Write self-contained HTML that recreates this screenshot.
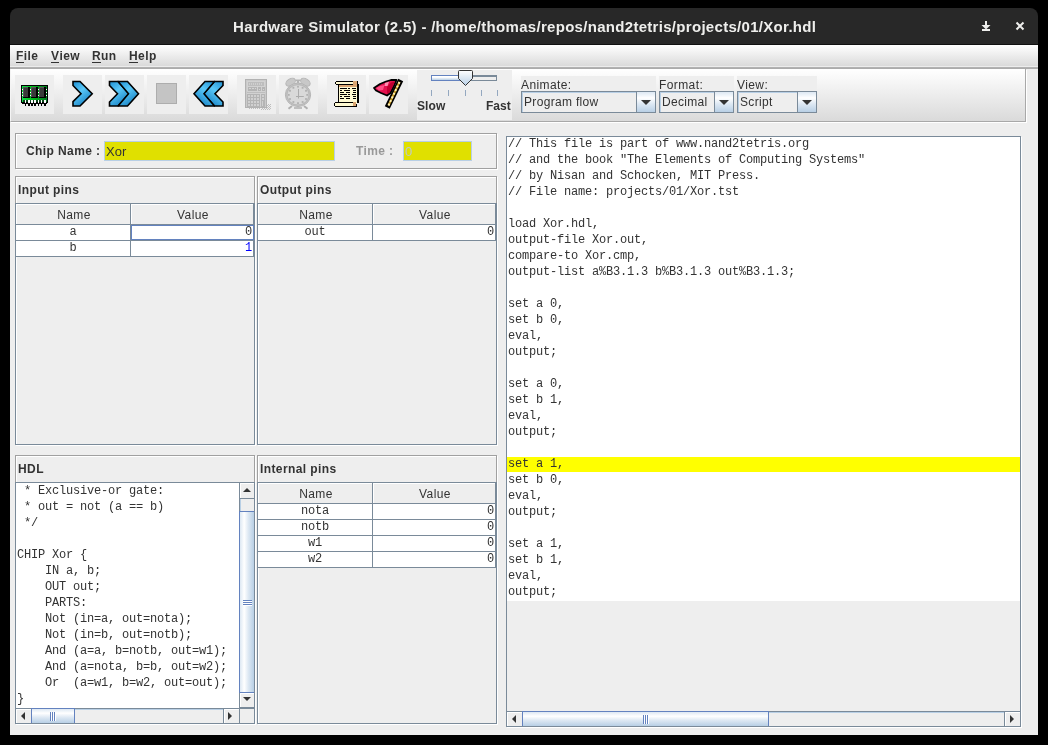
<!DOCTYPE html>
<html><head><meta charset="utf-8">
<style>
*{margin:0;padding:0;box-sizing:border-box}
html,body{width:1048px;height:745px;background:#000;overflow:hidden;font-family:"Liberation Sans",sans-serif;color:#333;font-size:12px}
.a{position:absolute}
.mono,.menu,.ptitle,.lbl,#ttext,.th,.combo span,.yfield span,.tx{will-change:transform}
#win{position:absolute;left:10px;top:45px;width:1028px;height:690px;background:#eee}
#title{position:absolute;left:10px;top:8px;width:1028px;height:37px;background:#282828;border-radius:8px 8px 0 0;border-bottom:1px solid #111}
#ttext{position:absolute;left:233px;top:18px;font-weight:bold;font-size:15px;color:#eeeeec;white-space:nowrap;line-height:17px;letter-spacing:0.3px}
#menubar{position:absolute;left:10px;top:45px;width:1028px;height:24px;background:linear-gradient(#fff 0px,#dadada 21px,#ececec 21px,#ececec 22px,#b4b4b4 22px,#a8a8a8 24px)}
.menu{position:absolute;top:49px;font-weight:bold;font-size:12px;line-height:14px;color:#333;letter-spacing:0.4px}
.menu u{text-decoration:none;border-bottom:1px solid #333;display:inline-block;line-height:11px}
#toolbar{position:absolute;left:10px;top:69px;width:1016px;height:53px;background:linear-gradient(#fff,#dadada);border:1px solid #a8a8a8;border-left:1px solid #f4f4f4;border-top:none;box-shadow:1px 1px 0 #fff}
.btn{position:absolute;top:75px;width:39px;height:39px;background:#eee}
.etch{position:absolute;border:1px solid #a0a0a0;box-shadow:1px 1px 0 #fff, inset 1px 1px 0 #fff}
.ptitle{position:absolute;font-weight:bold;font-size:12px;line-height:14px;color:#333;letter-spacing:0.4px;white-space:nowrap}
.sp{position:absolute;border:1px solid #7a8a99;box-shadow:1px 1px 0 #fff}
.mono{font-family:"Liberation Mono",monospace;font-size:12px;letter-spacing:-0.2px;white-space:pre;color:#333}
.lbl{font-size:12px;line-height:14px;color:#333;white-space:nowrap;letter-spacing:0.4px}
.combo{position:absolute;top:91px;height:22px;border:1px solid #7a8a99;background:#eee;box-shadow:inset 1px 1px 0 #b8cfe5}
.combo span{position:absolute;left:2px;top:3px;font-size:12px;line-height:14px;color:#333;white-space:nowrap;letter-spacing:0.32px}
.combo i{position:absolute;right:0;top:0;width:19px;height:20px;border-left:1px solid #7a8a99;background:linear-gradient(#dde8f3,#fff 30%,#dde8f3 60%,#b8cfe5)}
.combo i:after{content:"";position:absolute;left:4px;top:8px;border-left:5px solid transparent;border-right:5px solid transparent;border-top:5px solid #333}
.yfield{position:absolute;height:20px;border:1px solid #b8cfe5;background:#e0e000}
.yfield span{position:absolute;left:1px;top:2px;font-size:13px;line-height:15px;color:#333}
.tbl{position:absolute;width:240px;height:242px;border:1px solid #7a8a99;box-shadow:1px 1px 0 #fff}
.th{position:absolute;height:21px;background:#eee;border-right:1px solid #7a8a99;border-bottom:1px solid #7a8a99;box-shadow:inset 1px 1px 0 #fff;text-align:center;font-size:12px;line-height:22px;color:#333;letter-spacing:0.4px;padding-left:2px}
.td{position:absolute;height:16px;background:#fff;border-right:1px solid #7a8a99;border-bottom:1px solid #7a8a99;line-height:15px}
.txt{position:absolute}
.ln{height:16px;line-height:16px}
.vsb{position:absolute;width:15px;border-left:1px solid #7a8a99;background:#eee}
.hsb{position:absolute;height:15px;border-top:1px solid #7a8a99;background:#eee}
.hsb2{position:absolute;height:15px;border-top:1px solid #7a8a99;background:#eee}
.sbtn{position:absolute;background:#eee;box-shadow:inset 1px 1px 0 #fff}
.tri-up{width:0;height:0;border-left:4px solid transparent;border-right:4px solid transparent;border-bottom:4px solid #333}
.tri-dn{width:0;height:0;border-left:4px solid transparent;border-right:4px solid transparent;border-top:4px solid #333}
.tri-lt{width:0;height:0;border-top:4px solid transparent;border-bottom:4px solid transparent;border-right:4px solid #333}
.tri-rt{width:0;height:0;border-top:4px solid transparent;border-bottom:4px solid transparent;border-left:4px solid #333}
</style></head><body>
<div id="win"></div>
<div id="title"></div>
<div id="ttext">Hardware Simulator (2.5) - /home/thomas/repos/nand2tetris/projects/01/Xor.hdl</div>

<svg class="a" style="left:978px;top:17px" width="16" height="18" viewBox="0 0 16 18"><rect x="7" y="4" width="2" height="5" fill="#eeeeec"/><path d="M3.5,8 H12.5 L8,12.5 Z" fill="#eeeeec"/><rect x="4" y="12" width="8" height="2" fill="#eeeeec"/></svg>
<svg class="a" style="left:1012px;top:18px" width="16" height="16" viewBox="0 0 16 16"><path d="M4.5,4.5 L11.5,11.5 M11.5,4.5 L4.5,11.5" stroke="#eeeeec" stroke-width="2"/></svg>
<div id="menubar"></div>
<div class="menu" style="left:16px"><u>F</u>ile</div>
<div class="menu" style="left:51px"><u>V</u>iew</div>
<div class="menu" style="left:92px"><u>R</u>un</div>
<div class="menu" style="left:129px"><u>H</u>elp</div>

<div id="toolbar"></div>
<div class="btn" style="left:15px"><svg width="39" height="38" viewBox="0 0 39 38" shape-rendering="crispEdges"><defs><linearGradient id="gr" x1="0" y1="0" x2="1" y2="0"><stop offset="0" stop-color="#10e048"/><stop offset="0.45" stop-color="#00b818"/><stop offset="1" stop-color="#037a22"/></linearGradient></defs>
<rect x="6" y="10" width="27" height="18" fill="#000"/><rect x="7" y="28" width="25" height="1" fill="#000"/>
<rect x="7" y="11" width="25" height="16" fill="url(#gr)"/>
<rect x="8" y="25" width="23" height="2" fill="#064818"/>
<rect x="8" y="12" width="7" height="11" fill="#000"/><rect x="8" y="12" width="5" height="10" fill="#3a3a3a"/><rect x="8" y="12" width="5" height="1" fill="#585058"/><rect x="8" y="12" width="1" height="10" fill="#585058"/><rect x="16" y="12" width="7" height="11" fill="#000"/><rect x="16" y="12" width="5" height="10" fill="#3a3a3a"/><rect x="16" y="12" width="5" height="1" fill="#585058"/><rect x="16" y="12" width="1" height="10" fill="#585058"/><rect x="24" y="12" width="7" height="11" fill="#000"/><rect x="24" y="12" width="5" height="10" fill="#3a3a3a"/><rect x="24" y="12" width="5" height="1" fill="#585058"/><rect x="24" y="12" width="1" height="10" fill="#585058"/><g fill="#fff"><rect x="7" y="14" width="1" height="1"/><rect x="7" y="17" width="1" height="1"/><rect x="7" y="20" width="1" height="1"/><rect x="15" y="14" width="1" height="1"/><rect x="15" y="17" width="1" height="1"/><rect x="15" y="20" width="1" height="1"/><rect x="23" y="14" width="1" height="1"/><rect x="23" y="17" width="1" height="1"/><rect x="23" y="20" width="1" height="1"/><rect x="31" y="14" width="1" height="1"/><rect x="31" y="17" width="1" height="1"/><rect x="31" y="20" width="1" height="1"/><rect x="10" y="25" width="1.2" height="2.5"/><rect x="13" y="25" width="1.6" height="2.5"/><rect x="16" y="25" width="1.6" height="2.5"/><rect x="19" y="25" width="1.6" height="2.5"/><rect x="23" y="25" width="1" height="2.5"/><rect x="26" y="25" width="1" height="2.5"/><rect x="29" y="25" width="1.6" height="2.5"/></g><g fill="#000"><rect x="10" y="28" width="1.3" height="3"/><rect x="13.2" y="28" width="1.5" height="3"/><rect x="16" y="28" width="1.7" height="3"/><rect x="19" y="28" width="1.8" height="3"/><rect x="23" y="28" width="1.1" height="3"/><rect x="26" y="28" width="1.1" height="3"/><rect x="29.2" y="28" width="1.6" height="3"/></g>
</svg></div>
<div class="btn" style="left:63px"><svg width="39" height="38" viewBox="0 0 39 38"><defs><linearGradient id="bl" x1="0" y1="0" x2="0.6" y2="1"><stop offset="0" stop-color="#1e8fd2"/><stop offset="0.45" stop-color="#5ac8f8"/><stop offset="1" stop-color="#1882c4"/></linearGradient></defs>
<path d="M10,6.5 L17,6.5 L29.2,18.7 L17,31 L10,31 L10,26.7 L18,18.7 L10,10.5 Z" fill="url(#bl)" stroke="#000" stroke-width="1.6" stroke-linejoin="miter"/></svg></div>
<div class="btn" style="left:105px"><svg width="39" height="38" viewBox="0 0 39 38">
<path d="M4.5,6.5 L13,6.5 L24,18.7 L13,31 L4.5,31 L4.5,27 L12.5,18.7 L4.5,10.5 Z" fill="url(#bl)" stroke="#000" stroke-width="1.6"/>
<path d="M13.5,6.5 L22.5,6.5 L33.5,18.7 L22.5,31 L13.5,31 L13.5,30.5 L23.5,18.7 L13.5,7 Z" fill="url(#bl)" stroke="#000" stroke-width="1.6"/></svg></div>
<div class="btn" style="left:147px"><svg width="39" height="38" viewBox="0 0 39 38"><rect x="9.5" y="8.5" width="20" height="20" fill="#c4c4c4" stroke="#adadad" stroke-width="1"/></svg></div>
<div class="btn" style="left:189px"><svg width="39" height="38" viewBox="0 0 39 38"><g transform="translate(38.5,0) scale(-1,1)">
<path d="M4.5,6.5 L13,6.5 L24,18.7 L13,31 L4.5,31 L4.5,27 L12.5,18.7 L4.5,10.5 Z" fill="url(#bl)" stroke="#000" stroke-width="1.6"/>
<path d="M13.5,6.5 L22.5,6.5 L33.5,18.7 L22.5,31 L13.5,31 L13.5,30.5 L23.5,18.7 L13.5,7 Z" fill="url(#bl)" stroke="#000" stroke-width="1.6"/></g></svg></div>
<div class="btn" style="left:237px"><svg width="39" height="38" viewBox="0 0 39 38" shape-rendering="crispEdges">
<g fill="#bdbdbd"><rect x="29" y="29" width="1" height="1"/><rect x="31" y="29" width="1" height="1"/><rect x="33" y="29" width="1" height="1"/><rect x="30" y="30" width="1" height="1"/><rect x="32" y="30" width="1" height="1"/><rect x="29" y="31" width="1" height="1"/><rect x="31" y="31" width="1" height="1"/><rect x="33" y="31" width="1" height="1"/><rect x="24" y="32" width="1" height="1"/><rect x="26" y="32" width="1" height="1"/><rect x="28" y="32" width="1" height="1"/><rect x="30" y="32" width="1" height="1"/><rect x="32" y="32" width="1" height="1"/><rect x="25" y="33" width="1" height="1"/><rect x="27" y="33" width="1" height="1"/><rect x="29" y="33" width="1" height="1"/><rect x="31" y="33" width="1" height="1"/><rect x="33" y="33" width="1" height="1"/><rect x="24" y="34" width="1" height="1"/><rect x="26" y="34" width="1" height="1"/><rect x="28" y="34" width="1" height="1"/><rect x="30" y="34" width="1" height="1"/><rect x="32" y="34" width="1" height="1"/><rect x="12" y="33" width="1" height="1"/><rect x="14" y="33" width="1" height="1"/><rect x="16" y="33" width="1" height="1"/><rect x="18" y="33" width="1" height="1"/><rect x="20" y="33" width="1" height="1"/><rect x="22" y="33" width="1" height="1"/></g>
<rect x="8" y="4" width="22" height="29" rx="1" fill="#b2b2b2"/>
<rect x="9" y="5" width="20" height="27" fill="#cacaca"/>
<rect x="10" y="6" width="18" height="25" fill="#d2d2d2"/>
<rect x="11" y="7" width="16" height="4" fill="#bdbdbd"/>
<g fill="#cfcfcf"><rect x="12" y="8" width="1" height="2"/><rect x="14" y="8" width="1" height="2"/><rect x="16" y="8" width="1" height="2"/><rect x="18" y="8" width="1" height="2"/><rect x="20" y="8" width="1" height="2"/><rect x="22" y="8" width="1" height="2"/><rect x="24" y="8" width="1" height="2"/></g>
<rect x="11" y="12" width="9" height="4" fill="#b4b4b4"/><rect x="21" y="12" width="3" height="4" fill="#b4b4b4"/><rect x="25" y="12" width="3" height="4" fill="#b4b4b4"/>
<g fill="#d4d4d4"><rect x="12" y="13" width="2" height="1"/><rect x="15" y="13" width="2" height="1"/><rect x="18" y="13" width="1" height="1"/><rect x="22" y="14" width="1" height="1"/><rect x="26" y="14" width="1" height="1"/></g>
<rect x="10" y="17" width="18" height="1" fill="#bdbdbd"/>
<rect x="10" y="19" width="13" height="13" fill="#b4b4b4"/>
<rect x="24" y="19" width="4" height="13" fill="#b4b4b4"/>
<g fill="#d0d0d0"><rect x="11" y="20" width="2" height="2"/><rect x="14" y="20" width="2" height="2"/><rect x="17" y="20" width="2" height="2"/><rect x="20" y="20" width="2" height="2"/><rect x="11" y="23" width="2" height="2"/><rect x="14" y="23" width="2" height="2"/><rect x="17" y="23" width="2" height="2"/><rect x="20" y="23" width="2" height="2"/><rect x="11" y="26" width="2" height="2"/><rect x="14" y="26" width="2" height="2"/><rect x="17" y="26" width="2" height="2"/><rect x="20" y="26" width="2" height="2"/><rect x="11" y="29" width="2" height="2"/><rect x="14" y="29" width="2" height="2"/><rect x="17" y="29" width="2" height="2"/><rect x="20" y="29" width="2" height="2"/>
<rect x="25" y="20" width="2" height="2"/><rect x="25" y="23" width="2" height="2"/><rect x="25" y="26" width="1" height="5"/></g>
</svg></div>
<div class="btn" style="left:279px"><svg width="39" height="38" viewBox="0 0 39 38">
<ellipse cx="11.6" cy="7.2" rx="5.2" ry="3.3" transform="rotate(-32 11.6 7.2)" fill="#c8c8c8" stroke="#b4b4b4" stroke-width="1"/>
<ellipse cx="26.4" cy="7.2" rx="5.2" ry="3.3" transform="rotate(32 26.4 7.2)" fill="#c8c8c8" stroke="#b4b4b4" stroke-width="1"/>
<rect x="16.5" y="4.5" width="5" height="1.5" fill="#b4b4b4"/><rect x="17.8" y="5.5" width="2.4" height="3.5" fill="#b4b4b4"/>
<path d="M9.5,33.8 L13,31 M28.5,33.8 L25,31" stroke="#b0b0b0" stroke-width="2"/>
<rect x="15" y="32.2" width="8" height="1.6" fill="#b4b4b4"/>
<ellipse cx="19" cy="19.8" rx="12.6" ry="11.7" fill="#cdcdcd" stroke="#b4b4b4" stroke-width="1"/>
<ellipse cx="19" cy="19.8" rx="11.2" ry="10.3" fill="none" stroke="#b9b9b9" stroke-width="1.2"/>
<ellipse cx="19" cy="19.8" rx="10.2" ry="9.3" fill="#d9d9d9"/>
<g fill="#b0b0b0"><rect x="18.1" y="10.8" width="1.8" height="1.8"/><rect x="22.7" y="11.9" width="1.8" height="1.8"/><rect x="26.1" y="14.9" width="1.8" height="1.8"/><rect x="27.3" y="19.0" width="1.8" height="1.8"/><rect x="26.1" y="23.1" width="1.8" height="1.8"/><rect x="22.7" y="26.1" width="1.8" height="1.8"/><rect x="18.1" y="27.2" width="1.8" height="1.8"/><rect x="13.5" y="26.1" width="1.8" height="1.8"/><rect x="10.1" y="23.1" width="1.8" height="1.8"/><rect x="8.9" y="19.0" width="1.8" height="1.8"/><rect x="10.1" y="14.9" width="1.8" height="1.8"/><rect x="13.5" y="11.9" width="1.8" height="1.8"/></g>
<path d="M19.5,14 V23.5 M17,21.5 H24.8" stroke="#ababab" stroke-width="1"/>
</svg></div>
<div class="btn" style="left:327px"><svg width="39" height="38" viewBox="0 0 39 38" shape-rendering="crispEdges">
<rect x="11" y="9" width="21" height="19" fill="#000"/>
<rect x="12" y="10" width="18" height="18" fill="#fffad2"/>
<rect x="12" y="10" width="18" height="2" fill="#dba673"/>
<rect x="9" y="6" width="22" height="4" fill="#000"/><rect x="8" y="7" width="1" height="2" fill="#000"/>
<rect x="9" y="7" width="17" height="2" fill="#fffad2"/>
<rect x="26" y="6" width="4" height="5" fill="#dba673"/><rect x="30" y="7" width="1" height="21" fill="#000"/>
<g fill="#000"><rect x="13" y="13" width="7" height="1"/><rect x="21" y="13" width="2" height="1"/><rect x="25" y="13" width="4" height="1"/>
<rect x="13" y="15" width="2" height="1"/><rect x="17" y="15" width="6" height="1"/><rect x="26" y="15" width="3" height="1"/>
<rect x="13" y="17" width="4" height="1"/><rect x="19" y="17" width="4" height="1"/><rect x="26" y="17" width="3" height="1"/>
<rect x="13" y="19" width="7" height="1"/><rect x="21" y="19" width="2" height="1"/><rect x="25" y="19" width="4" height="1"/>
<rect x="13" y="21" width="2" height="1"/><rect x="17" y="21" width="6" height="1"/><rect x="26" y="21" width="3" height="1"/>
<rect x="13" y="23" width="4" height="1"/><rect x="19" y="23" width="4" height="1"/><rect x="26" y="23" width="3" height="1"/></g>
<rect x="8" y="27" width="22" height="5" fill="#000"/><rect x="7" y="28" width="1" height="3" fill="#000"/>
<rect x="8" y="28" width="18" height="3" fill="#fffad2"/>
<rect x="26" y="27" width="3" height="4" fill="#dba673"/><rect x="29" y="26" width="1" height="3" fill="#fffad2"/>
</svg></div>
<div class="btn" style="left:369px"><svg width="39" height="38" viewBox="0 0 39 38">
<path d="M19.5,30 L30.5,7.5" stroke="#000" stroke-width="5.5" stroke-linecap="square"/>
<path d="M19.5,30.5 L30.5,7" stroke="#c89a20" stroke-width="2"/>
<path d="M19.5,30.5 L30.5,7" stroke="#fff2b8" stroke-width="2" stroke-dasharray="2 2"/>
<path d="M5,13 L11,9 L17,6.5 L22,5 L27.5,5 L25,11 L21.5,18 L18,20.5 L12,18 L7,15.5 Z" fill="#e3104e" stroke="#000" stroke-width="1.8" stroke-linejoin="round"/>
<path d="M7,13 L11,11 L15.5,10 L14,15 L10,15.5 Z" fill="#ff4f86"/>
<path d="M18,12 L22,7.5 L26,6.5 L23.5,12 L20.5,17.5 L18,19 Z" fill="#c00030"/>
<path d="M16,8 L20,6.8 L18.5,11 L15.5,11 Z" fill="#ff8fb0"/>
</svg></div>

<!-- slider -->
<div class="a" style="left:417px;top:70px;width:95px;height:50px;background:#eee"></div>
<div class="a" style="left:431px;top:75px;width:66px;height:6px;border:1px solid #7a8a99;border-top-width:2px;background:#eee"></div>
<div class="a" style="left:431px;top:75px;width:30px;height:6px;border:1px solid #6382bf;border-right:none;background:linear-gradient(#fff,#fff 30%,#b8cfe5)"></div>
<svg class="a" style="left:457px;top:69px" width="17" height="18" viewBox="0 0 17 18"><defs><linearGradient id="th" x1="0" y1="0" x2="0" y2="1"><stop offset="0" stop-color="#fff"/><stop offset="1" stop-color="#b8cfe5"/></linearGradient></defs><path d="M1.5,2.5 Q1.5,1.5 2.5,1.5 H14.5 Q15.5,1.5 15.5,2.5 V9.5 L8.5,16.5 L1.5,9.5 Z" fill="url(#th)" stroke="#333" stroke-width="1"/></svg>
<div class="a" style="left:431px;top:90px;width:1px;height:6px;background:#94a8c0"></div>
<div class="a" style="left:448px;top:90px;width:1px;height:6px;background:#94a8c0"></div>
<div class="a" style="left:465px;top:90px;width:1px;height:6px;background:#94a8c0"></div>
<div class="a" style="left:481px;top:90px;width:1px;height:6px;background:#94a8c0"></div>
<div class="a" style="left:497px;top:90px;width:1px;height:6px;background:#94a8c0"></div>
<div class="a tx" style="left:417px;top:99px;font-weight:bold;font-size:12px;line-height:14px;letter-spacing:0.1px">Slow</div>
<div class="a tx" style="left:486px;top:99px;font-weight:bold;font-size:12px;line-height:14px;letter-spacing:0px">Fast</div>

<!-- combos -->
<div class="a" style="left:521px;top:76px;width:135px;height:37px;background:#eee"></div>
<div class="a" style="left:659px;top:76px;width:75px;height:37px;background:#eee"></div>
<div class="a" style="left:737px;top:76px;width:80px;height:37px;background:#eee"></div>
<div class="a lbl" style="left:521px;top:78px">Animate:</div>
<div class="a lbl" style="left:659px;top:78px">Format:</div>
<div class="a lbl" style="left:737px;top:78px">View:</div>
<div class="combo" style="left:521px;width:135px"><span>Program flow</span><i></i></div>
<div class="combo" style="left:659px;width:75px"><span>Decimal</span><i></i></div>
<div class="combo" style="left:737px;width:80px"><span>Script</span><i></i></div>

<!-- content panels -->
<div class="etch" style="left:15px;top:133px;width:482px;height:36px"></div>
<div class="ptitle" style="left:26px;top:144px">Chip Name :</div>
<div class="yfield" style="left:104px;top:141px;width:231px"><span>Xor</span></div>
<div class="ptitle" style="left:356px;top:144px;color:#999">Time :</div>
<div class="yfield" style="left:403px;top:141px;width:69px"><span style="color:#bfcac8">0</span></div>

<div class="etch" style="left:15px;top:176px;width:240px;height:269px"></div>
<div class="ptitle" style="left:18px;top:183px">Input pins</div>
<div class="tbl" style="left:15px;top:203px"></div>
<div class="th" style="left:16px;top:204px;width:115px">Name</div>
<div class="th" style="left:131px;top:204px;width:123px">Value</div>
<div class="td mono" style="left:16px;top:225px;width:115px;text-align:center"><span class="tx">a</span></div>
<div class="td mono" style="left:131px;top:225px;width:123px;text-align:right;padding-right:1px;"><span class="tx">0</span></div>
<div class="td mono" style="left:16px;top:241px;width:115px;text-align:center"><span class="tx">b</span></div>
<div class="td mono" style="left:131px;top:241px;width:123px;text-align:right;padding-right:1px;color:#00f;"><span class="tx">1</span></div>
<div class="a" style="left:131px;top:225px;width:123px;height:15px;border:1px solid #6382bf"></div>
<div class="etch" style="left:257px;top:176px;width:240px;height:269px"></div>
<div class="ptitle" style="left:260px;top:183px">Output pins</div>
<div class="tbl" style="left:257px;top:203px"></div>
<div class="th" style="left:258px;top:204px;width:115px">Name</div>
<div class="th" style="left:373px;top:204px;width:123px">Value</div>
<div class="td mono" style="left:258px;top:225px;width:115px;text-align:center"><span class="tx">out</span></div>
<div class="td mono" style="left:373px;top:225px;width:123px;text-align:right;padding-right:1px;"><span class="tx">0</span></div>
<div class="etch" style="left:15px;top:455px;width:240px;height:269px"></div>
<div class="ptitle" style="left:18px;top:462px">HDL</div>
<div class="sp" style="left:15px;top:482px;width:240px;height:242px;background:#fff"></div>
<div class="a" style="left:16px;top:483px;width:223px;height:225px;overflow:hidden;background:#fff"><div class="mono txt" style="left:1px;top:0px"><div class="ln"> * Exclusive-or gate:</div><div class="ln"> * out = not (a == b)</div><div class="ln"> */</div><div class="ln">&nbsp;</div><div class="ln">CHIP Xor {</div><div class="ln">    IN a, b;</div><div class="ln">    OUT out;</div><div class="ln">    PARTS:</div><div class="ln">    Not (in=a, out=nota);</div><div class="ln">    Not (in=b, out=notb);</div><div class="ln">    And (a=a, b=notb, out=w1);</div><div class="ln">    And (a=nota, b=b, out=w2);</div><div class="ln">    Or  (a=w1, b=w2, out=out);</div><div class="ln">}</div></div></div>
<!-- HDL v scrollbar -->
<div class="a" style="left:239px;top:483px;width:15px;height:225px;background:#eee;border-left:1px solid #7a8a99"></div>
<div class="sbtn" style="left:240px;top:483px;width:14px;height:16px;border-bottom:1px solid #7a8a99"></div>
<div class="a tri-up" style="left:243px;top:488px"></div>
<div class="a" style="left:240px;top:499px;width:14px;height:12px;border-left:1px solid #b8cfe5"></div>
<div class="a" style="left:239px;top:511px;width:15px;height:182px;border:1px solid #6382bf;border-right:none;background:linear-gradient(90deg,#dde8f3 0%,#fff 30%,#dde8f3 60%,#b8cfe5 100%)"></div>
<div class="a" style="left:243px;top:600px;width:9px;height:1px;background:#6382bf;box-shadow:0 1px 0 #fff"></div>
<div class="a" style="left:243px;top:602px;width:9px;height:1px;background:#6382bf;box-shadow:0 1px 0 #fff"></div>
<div class="a" style="left:243px;top:604px;width:9px;height:1px;background:#6382bf;box-shadow:0 1px 0 #fff"></div>
<div class="sbtn" style="left:240px;top:693px;width:14px;height:15px;border-bottom:1px solid #7a8a99"></div>
<div class="a tri-dn" style="left:243px;top:697px"></div>
<!-- HDL h scrollbar -->
<div class="a" style="left:16px;top:708px;width:223px;height:15px;background:#eee;border-top:1px solid #7a8a99"></div>
<div class="a" style="left:31px;top:709px;width:208px;height:1px;background:#b8cfe5"></div>
<div class="sbtn" style="left:16px;top:709px;width:15px;height:14px"></div>
<div class="a tri-lt" style="left:21px;top:712px"></div>
<div class="a" style="left:31px;top:708px;width:44px;height:15px;border:1px solid #6382bf;border-bottom:none;background:linear-gradient(#dde8f3 0%,#fff 30%,#dde8f3 60%,#b8cfe5 100%)"></div>
<div class="a" style="left:50px;top:712px;width:1px;height:9px;background:#6382bf;box-shadow:1px 0 0 #fff"></div>
<div class="a" style="left:52px;top:712px;width:1px;height:9px;background:#6382bf;box-shadow:1px 0 0 #fff"></div>
<div class="a" style="left:54px;top:712px;width:1px;height:9px;background:#6382bf;box-shadow:1px 0 0 #fff"></div>
<div class="sbtn" style="left:223px;top:709px;width:16px;height:14px;border-left:1px solid #7a8a99"></div>
<div class="a tri-rt" style="left:228px;top:712px"></div>
<div class="a" style="left:239px;top:708px;width:15px;height:15px;background:#eee;border-top:1px solid #7a8a99;border-left:1px solid #7a8a99"></div>

<div class="etch" style="left:257px;top:455px;width:240px;height:269px"></div>
<div class="ptitle" style="left:260px;top:462px">Internal pins</div>
<div class="tbl" style="left:257px;top:482px"></div>
<div class="th" style="left:258px;top:483px;width:115px">Name</div>
<div class="th" style="left:373px;top:483px;width:123px">Value</div>
<div class="td mono" style="left:258px;top:504px;width:115px;text-align:center"><span class="tx">nota</span></div>
<div class="td mono" style="left:373px;top:504px;width:123px;text-align:right;padding-right:1px;"><span class="tx">0</span></div>
<div class="td mono" style="left:258px;top:520px;width:115px;text-align:center"><span class="tx">notb</span></div>
<div class="td mono" style="left:373px;top:520px;width:123px;text-align:right;padding-right:1px;"><span class="tx">0</span></div>
<div class="td mono" style="left:258px;top:536px;width:115px;text-align:center"><span class="tx">w1</span></div>
<div class="td mono" style="left:373px;top:536px;width:123px;text-align:right;padding-right:1px;"><span class="tx">0</span></div>
<div class="td mono" style="left:258px;top:552px;width:115px;text-align:center"><span class="tx">w2</span></div>
<div class="td mono" style="left:373px;top:552px;width:123px;text-align:right;padding-right:1px;"><span class="tx">0</span></div>

<div class="sp" style="left:506px;top:136px;width:515px;height:591px;background:#eee"></div>
<div class="a" style="left:507px;top:137px;width:513px;height:464px;background:#fff"></div>
<div class="a" style="left:507px;top:457px;width:513px;height:15px;background:#ff0"></div>
<div class="mono txt" style="left:508px;top:136px"><div class="ln">// This file is part of www.nand2tetris.org</div><div class="ln">// and the book "The Elements of Computing Systems"</div><div class="ln">// by Nisan and Schocken, MIT Press.</div><div class="ln">// File name: projects/01/Xor.tst</div><div class="ln">&nbsp;</div><div class="ln">load Xor.hdl,</div><div class="ln">output-file Xor.out,</div><div class="ln">compare-to Xor.cmp,</div><div class="ln">output-list a%B3.1.3 b%B3.1.3 out%B3.1.3;</div><div class="ln">&nbsp;</div><div class="ln">set a 0,</div><div class="ln">set b 0,</div><div class="ln">eval,</div><div class="ln">output;</div><div class="ln">&nbsp;</div><div class="ln">set a 0,</div><div class="ln">set b 1,</div><div class="ln">eval,</div><div class="ln">output;</div><div class="ln">&nbsp;</div><div class="ln">set a 1,</div><div class="ln">set b 0,</div><div class="ln">eval,</div><div class="ln">output;</div><div class="ln">&nbsp;</div><div class="ln">set a 1,</div><div class="ln">set b 1,</div><div class="ln">eval,</div><div class="ln">output;</div></div>
<!-- script h scrollbar -->
<div class="a" style="left:507px;top:711px;width:513px;height:15px;background:#eee;border-top:1px solid #7a8a99"></div>
<div class="a" style="left:768px;top:712px;width:236px;height:1px;background:#b8cfe5"></div>
<div class="sbtn" style="left:507px;top:712px;width:15px;height:14px"></div>
<div class="a tri-lt" style="left:512px;top:715px"></div>
<div class="a" style="left:522px;top:711px;width:247px;height:15px;border:1px solid #6382bf;border-bottom:none;background:linear-gradient(#dde8f3 0%,#fff 30%,#dde8f3 60%,#b8cfe5 100%)"></div>
<div class="a" style="left:643px;top:715px;width:1px;height:9px;background:#6382bf;box-shadow:1px 0 0 #fff"></div>
<div class="a" style="left:645px;top:715px;width:1px;height:9px;background:#6382bf;box-shadow:1px 0 0 #fff"></div>
<div class="a" style="left:647px;top:715px;width:1px;height:9px;background:#6382bf;box-shadow:1px 0 0 #fff"></div>
<div class="sbtn" style="left:1004px;top:712px;width:16px;height:14px;border-left:1px solid #7a8a99"></div>
<div class="a tri-rt" style="left:1010px;top:715px"></div>
</body></html>
